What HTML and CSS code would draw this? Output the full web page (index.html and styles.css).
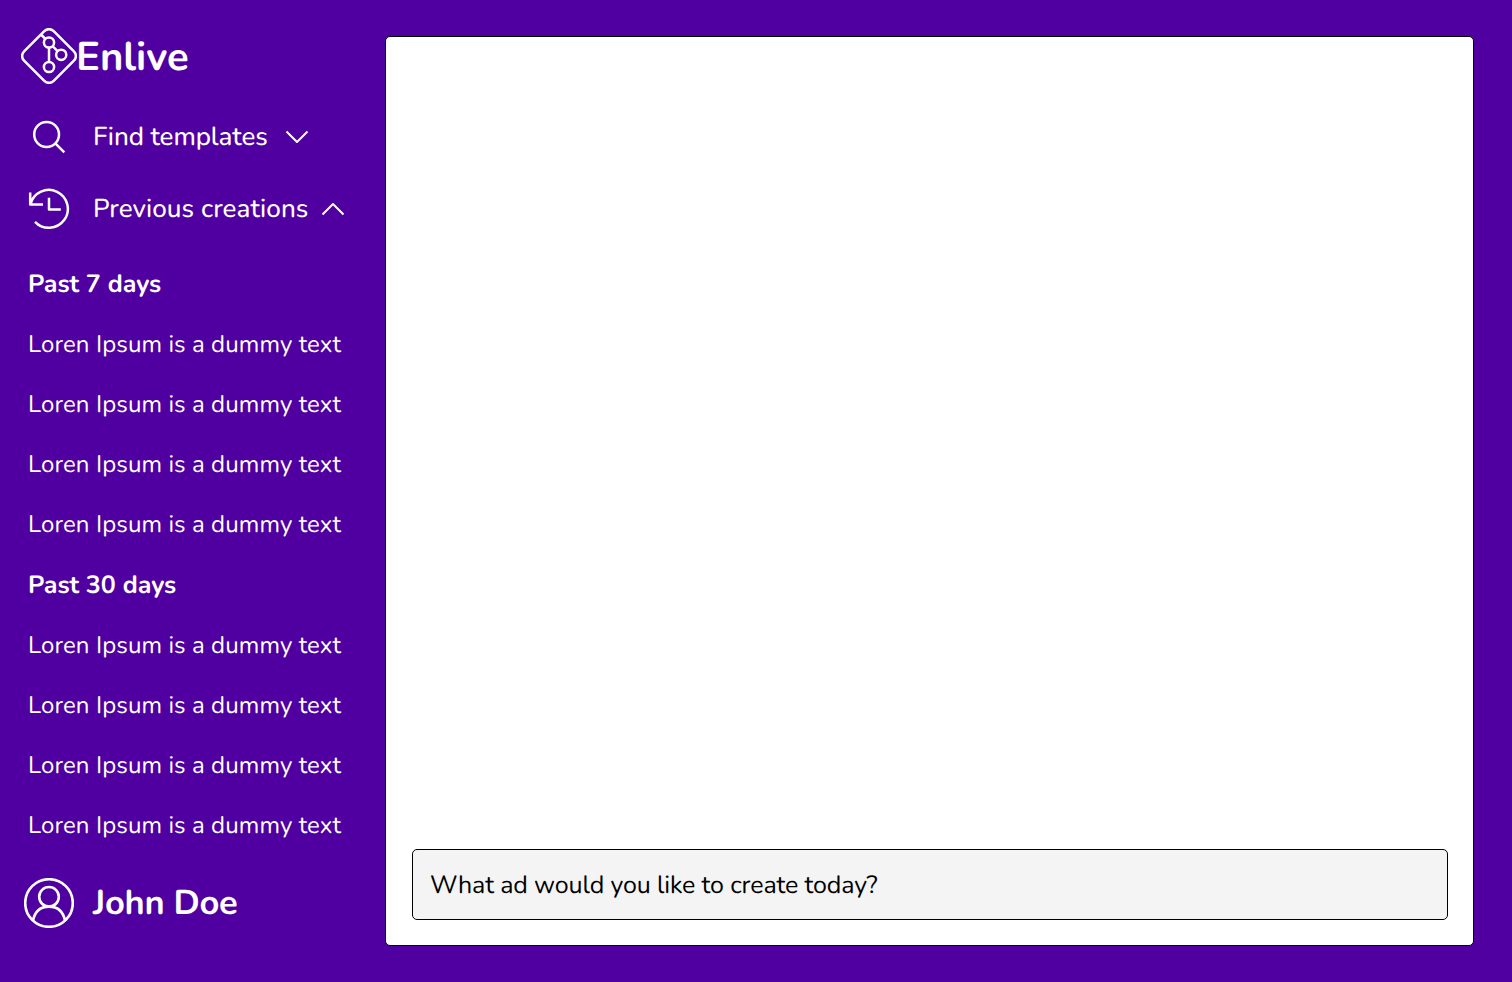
FILE: index.html
```html
<!DOCTYPE html>
<html lang="en">
<head>
<meta charset="utf-8">
<title>Enlive</title>
<link rel="stylesheet" href="styles.css">
</head>
<body>
<div class="app">
  <aside class="sidebar">
    <div class="brand">
      <svg class="brand-icon" viewBox="0 0 56 56"><path d="M23.3 3.1a6.6 6.6 0 0 1 9.4 0L52.9 23.3a6.6 6.6 0 0 1 0 9.4L32.7 52.9a6.6 6.6 0 0 1-9.4 0L3.1 32.7a6.6 6.6 0 0 1 0-9.4ZM20 6.5l4.6 4.6M28 19v15M31.5 18l5 5.2"/><circle cx="28" cy="14.5" r="5.1"/><circle cx="40.2" cy="26.8" r="5.1"/><circle cx="28" cy="39" r="5.1"/></svg>
      <span class="brand-name">Enlive</span>
    </div>
    <nav class="nav">
      <a class="nav-row">
        <svg class="nav-icon" viewBox="0 0 42 42"><circle cx="18.6" cy="18.5" r="12.4"/><path d="M27.3 27.3 36.3 36.3"/></svg>
        <span class="nav-label find">Find templates</span>
        <svg class="chevron" viewBox="0 0 24 14"><path d="M1.5 1.5 12 12 22.5 1.5"/></svg>
      </a>
      <a class="nav-row">
        <svg class="nav-icon" viewBox="0 0 42 42"><path d="M2.2 4.4v12.1h12.8M2.5 15.8A19 19 0 1 1 7 33.9M21 9.8v11.6h11.8"/></svg>
        <span class="nav-label previous">Previous creations</span>
        <svg class="chevron up" viewBox="0 0 24 14"><path d="M1.5 12.5 12 2 22.5 12.5"/></svg>
      </a>
    </nav>
    <div class="history">
      <h2 class="heading week">Past 7 days</h2>
      <p class="entry">Loren Ipsum is a dummy text</p>
      <p class="entry">Loren Ipsum is a dummy text</p>
      <p class="entry">Loren Ipsum is a dummy text</p>
      <p class="entry">Loren Ipsum is a dummy text</p>
      <h2 class="heading month">Past 30 days</h2>
      <p class="entry">Loren Ipsum is a dummy text</p>
      <p class="entry">Loren Ipsum is a dummy text</p>
      <p class="entry">Loren Ipsum is a dummy text</p>
      <p class="entry">Loren Ipsum is a dummy text</p>
    </div>
    <div class="user">
      <svg class="user-icon" viewBox="0 0 50 50"><circle cx="25" cy="25" r="23.8"/><circle cx="25" cy="18.8" r="9.8"/><path d="M9 42.5C11 33 17 28.6 25 28.6S39 33 41 42.5"/></svg>
      <span class="user-name">John Doe</span>
    </div>
  </aside>
  <main class="panel">
    <div class="prompt"><span class="prompt-text">What ad would you like to create today?</span></div>
  </main>
</div>
</body>
</html>
```
FILE: styles.css
```css
* { box-sizing: border-box; }
body { margin: 0; font-family: Nunito, Lato, sans-serif; text-rendering: geometricPrecision; }
svg { display: block; flex: none; fill: none; stroke: #fff; stroke-width: 2.5; stroke-linecap: butt; stroke-linejoin: round; }
span, p, h2 { white-space: nowrap; }
.app { display: flex; width: 1512px; height: 982px; padding: 36px 38px 36px 0; background: #5000a0; color: #fff; }
.sidebar { width: 385px; height: 946px; margin-top: -36px; padding-top: 28px; flex: none; }
.brand { display: flex; align-items: center; height: 56px; padding-left: 21px; }
.brand-icon { width: 56px; height: 56px; }
.brand-name { margin-left: -1px; padding-top: 4px; font-size: 40px; font-weight: 700; line-height: 56px; }
.nav { padding: 17px 0 0 28px; }
.nav-row { display: flex; align-items: center; height: 72px; }
.nav-icon { width: 42px; height: 42px; }
.nav-label { margin-left: 23px; padding-top: 2px; font-size: 26px; font-weight: 500; line-height: 36px; }
.find { width: 192px; letter-spacing: -0.1px; }
.previous { width: 228px; letter-spacing: 0.06px; }
.chevron { width: 24px; height: 14px; stroke-width: 2; }
.history { padding: 9.7px 0 0 28px; }
.heading, .entry { margin: 0; height: 60px; line-height: 60px; }
.heading { font-size: 25px; font-weight: 700; }
.week { line-height: 59px; }
.month { height: 61px; line-height: 61px; }
.entry { font-size: 24px; letter-spacing: 0.1px; }
.user { display: flex; align-items: center; height: 50px; margin-top: 22.3px; padding-left: 24px; gap: 19px; }
.user-icon { width: 50px; height: 50px; stroke-width: 2.6; }
.user-name { padding-top: 2px; font-size: 34.5px; font-weight: 700; line-height: 50px; letter-spacing: -0.27px; }
.panel { display: flex; align-items: flex-end; flex: 1; padding: 0 25px 25px 26px; background: #fff; border: 1px solid #000; border-radius: 5px; }
.prompt { display: flex; align-items: center; width: 100%; height: 71px; padding-left: 17px; background: #f4f4f4; border: 1px solid #000; border-radius: 5px; color: #000; }
.prompt-text { font-size: 25px; line-height: 36px; letter-spacing: -0.12px; }
```
